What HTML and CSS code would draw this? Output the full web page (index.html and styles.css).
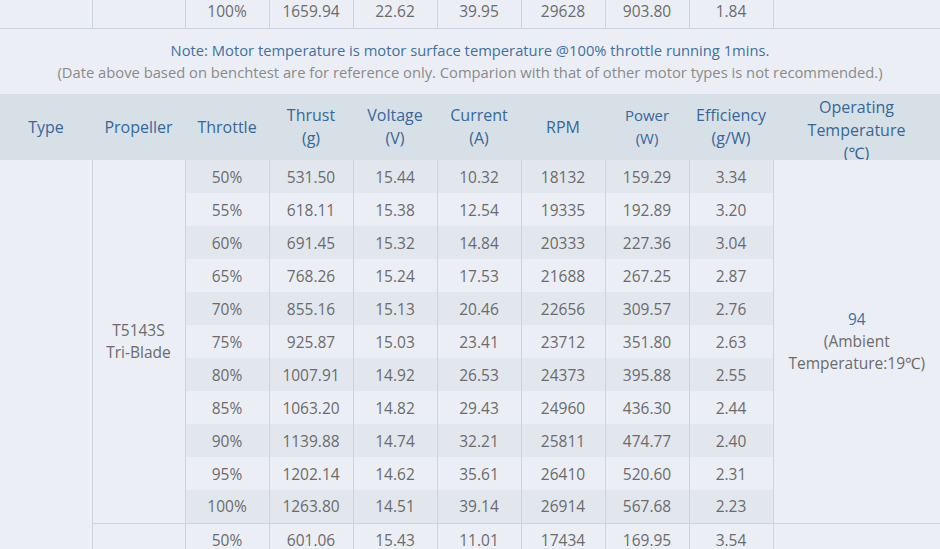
FILE: index.html
```html
<!DOCTYPE html>
<html>
<head>
<meta charset="utf-8">
<link rel="stylesheet" href="styles.css">
</head>
<body>
<div class="page">
  <div class="prev-wrap">
    <table class="grid prev">
      <colgroup>
        <col class="w-type"><col class="w-prop"><col class="w-num"><col class="w-num"><col class="w-num"><col class="w-num"><col class="w-num"><col class="w-num"><col class="w-num"><col class="w-temp">
      </colgroup>
      <tbody>
        <tr>
          <td class="c-type"></td><td class="c-prop"></td>
          <td>100%</td><td>1659.94</td><td>22.62</td><td>39.95</td><td>29628</td><td>903.80</td><td>1.84</td>
          <td class="c-temp"></td>
        </tr>
      </tbody>
    </table>
  </div>

  <div class="note">
    <p class="note-main">Note: Motor temperature is motor surface temperature @100% throttle running 1mins.</p>
    <p class="note-sub">(Date above based on benchtest are for reference only. Comparion with that of other motor types is not recommended.)</p>
  </div>

  <table class="grid spec">
    <colgroup>
      <col class="w-type"><col class="w-prop"><col class="w-num"><col class="w-num"><col class="w-num"><col class="w-num"><col class="w-num"><col class="w-num"><col class="w-num"><col class="w-temp">
    </colgroup>
    <thead>
      <tr>
        <th>Type</th>
        <th>Propeller</th>
        <th>Throttle</th>
        <th>Thrust<br>(g)</th>
        <th>Voltage<br>(V)</th>
        <th>Current<br>(A)</th>
        <th>RPM</th>
        <th class="h-small">Power<br>(W)</th>
        <th>Efficiency<br>(g/W)</th>
        <th class="h-temp"><div class="h-clip">Operating<br>Temperature<br>(℃)</div></th>
      </tr>
    </thead>
    <tbody>
      <tr class="alt">
        <td class="c-type" rowspan="12"></td>
        <td class="c-prop" rowspan="11">T5143S<br>Tri-Blade</td>
        <td>50%</td><td>531.50</td><td>15.44</td><td>10.32</td><td>18132</td><td>159.29</td><td>3.34</td>
        <td class="c-temp" rowspan="11"><span class="temp-val">94</span><br>(Ambient<br>Temperature:19℃)</td>
      </tr>
      <tr><td>55%</td><td>618.11</td><td>15.38</td><td>12.54</td><td>19335</td><td>192.89</td><td>3.20</td></tr>
      <tr class="alt"><td>60%</td><td>691.45</td><td>15.32</td><td>14.84</td><td>20333</td><td>227.36</td><td>3.04</td></tr>
      <tr><td>65%</td><td>768.26</td><td>15.24</td><td>17.53</td><td>21688</td><td>267.25</td><td>2.87</td></tr>
      <tr class="alt"><td>70%</td><td>855.16</td><td>15.13</td><td>20.46</td><td>22656</td><td>309.57</td><td>2.76</td></tr>
      <tr><td>75%</td><td>925.87</td><td>15.03</td><td>23.41</td><td>23712</td><td>351.80</td><td>2.63</td></tr>
      <tr class="alt"><td>80%</td><td>1007.91</td><td>14.92</td><td>26.53</td><td>24373</td><td>395.88</td><td>2.55</td></tr>
      <tr><td>85%</td><td>1063.20</td><td>14.82</td><td>29.43</td><td>24960</td><td>436.30</td><td>2.44</td></tr>
      <tr class="alt"><td>90%</td><td>1139.88</td><td>14.74</td><td>32.21</td><td>25811</td><td>474.77</td><td>2.40</td></tr>
      <tr><td>95%</td><td>1202.14</td><td>14.62</td><td>35.61</td><td>26410</td><td>520.60</td><td>2.31</td></tr>
      <tr class="alt"><td>100%</td><td>1263.80</td><td>14.51</td><td>39.14</td><td>26914</td><td>567.68</td><td>2.23</td></tr>
      <tr class="group-start">
        <td class="c-prop"></td>
        <td>50%</td><td>601.06</td><td>15.43</td><td>11.01</td><td>17434</td><td>169.95</td><td>3.54</td>
        <td class="c-temp"></td>
      </tr>
    </tbody>
  </table>
</div>
</body>
</html>
```

FILE: styles.css
```css
html, body {
  margin: 0;
  padding: 0;
  background: #ebeff5;
}

body {
  font-family: "Open Sans", "Noto Sans", "DejaVu Sans", sans-serif;
  color: #6b6b6b;
}

.page {
  width: 940px;
  overflow: hidden;
}

.prev-wrap {
  height: 29px;
  overflow: hidden;
}

.grid {
  width: 940px;
  table-layout: fixed;
  border-collapse: collapse;
  border-spacing: 0;
}

.w-type { width: 92px; }
.w-prop { width: 93px; }
.w-num { width: 84px; }
.w-temp { width: 167px; }

.grid td {
  height: 33px;
  padding: 0;
  box-sizing: border-box;
  text-align: center;
  vertical-align: middle;
  font-size: 15.5px;
  line-height: 22px;
  color: #6b6b6b;
  border-left: 1px solid #cbd3dc;
}

.grid td.c-type {
  border-left: none;
}

.prev {
  margin-top: -5px;
}

.prev td {
  border-bottom: 1px solid #cbd3dc;
}

.note {
  padding: 10px 0 11px;
  text-align: center;
  font-size: 14.75px;
  line-height: 22px;
}

.note p {
  margin: 0;
}

.note-main {
  color: #3f70a4;
}

.note-sub {
  color: #8a8a8a;
}

.spec thead th {
  height: 66px;
  padding: 0;
  background: #d8e0e7;
  color: #35679a;
  font-weight: normal;
  font-size: 16px;
  line-height: 23px;
  text-align: center;
  vertical-align: middle;
}

.spec thead th.h-small {
  font-size: 15px;
}

.spec thead th.h-temp {
  vertical-align: top;
}

.h-clip {
  height: 66px;
  padding-top: 2px;
  box-sizing: border-box;
  overflow: hidden;
}

.spec tbody tr.alt td {
  background: #e2e7ee;
}

.spec tbody tr.alt td.c-type,
.spec tbody tr.alt td.c-prop,
.spec tbody tr.alt td.c-temp {
  background: #ebeff5;
}

.spec tbody tr.group-start td {
  border-top: 1px solid #cbd3dc;
}

.temp-val {
  color: #3f70a4;
}
```
